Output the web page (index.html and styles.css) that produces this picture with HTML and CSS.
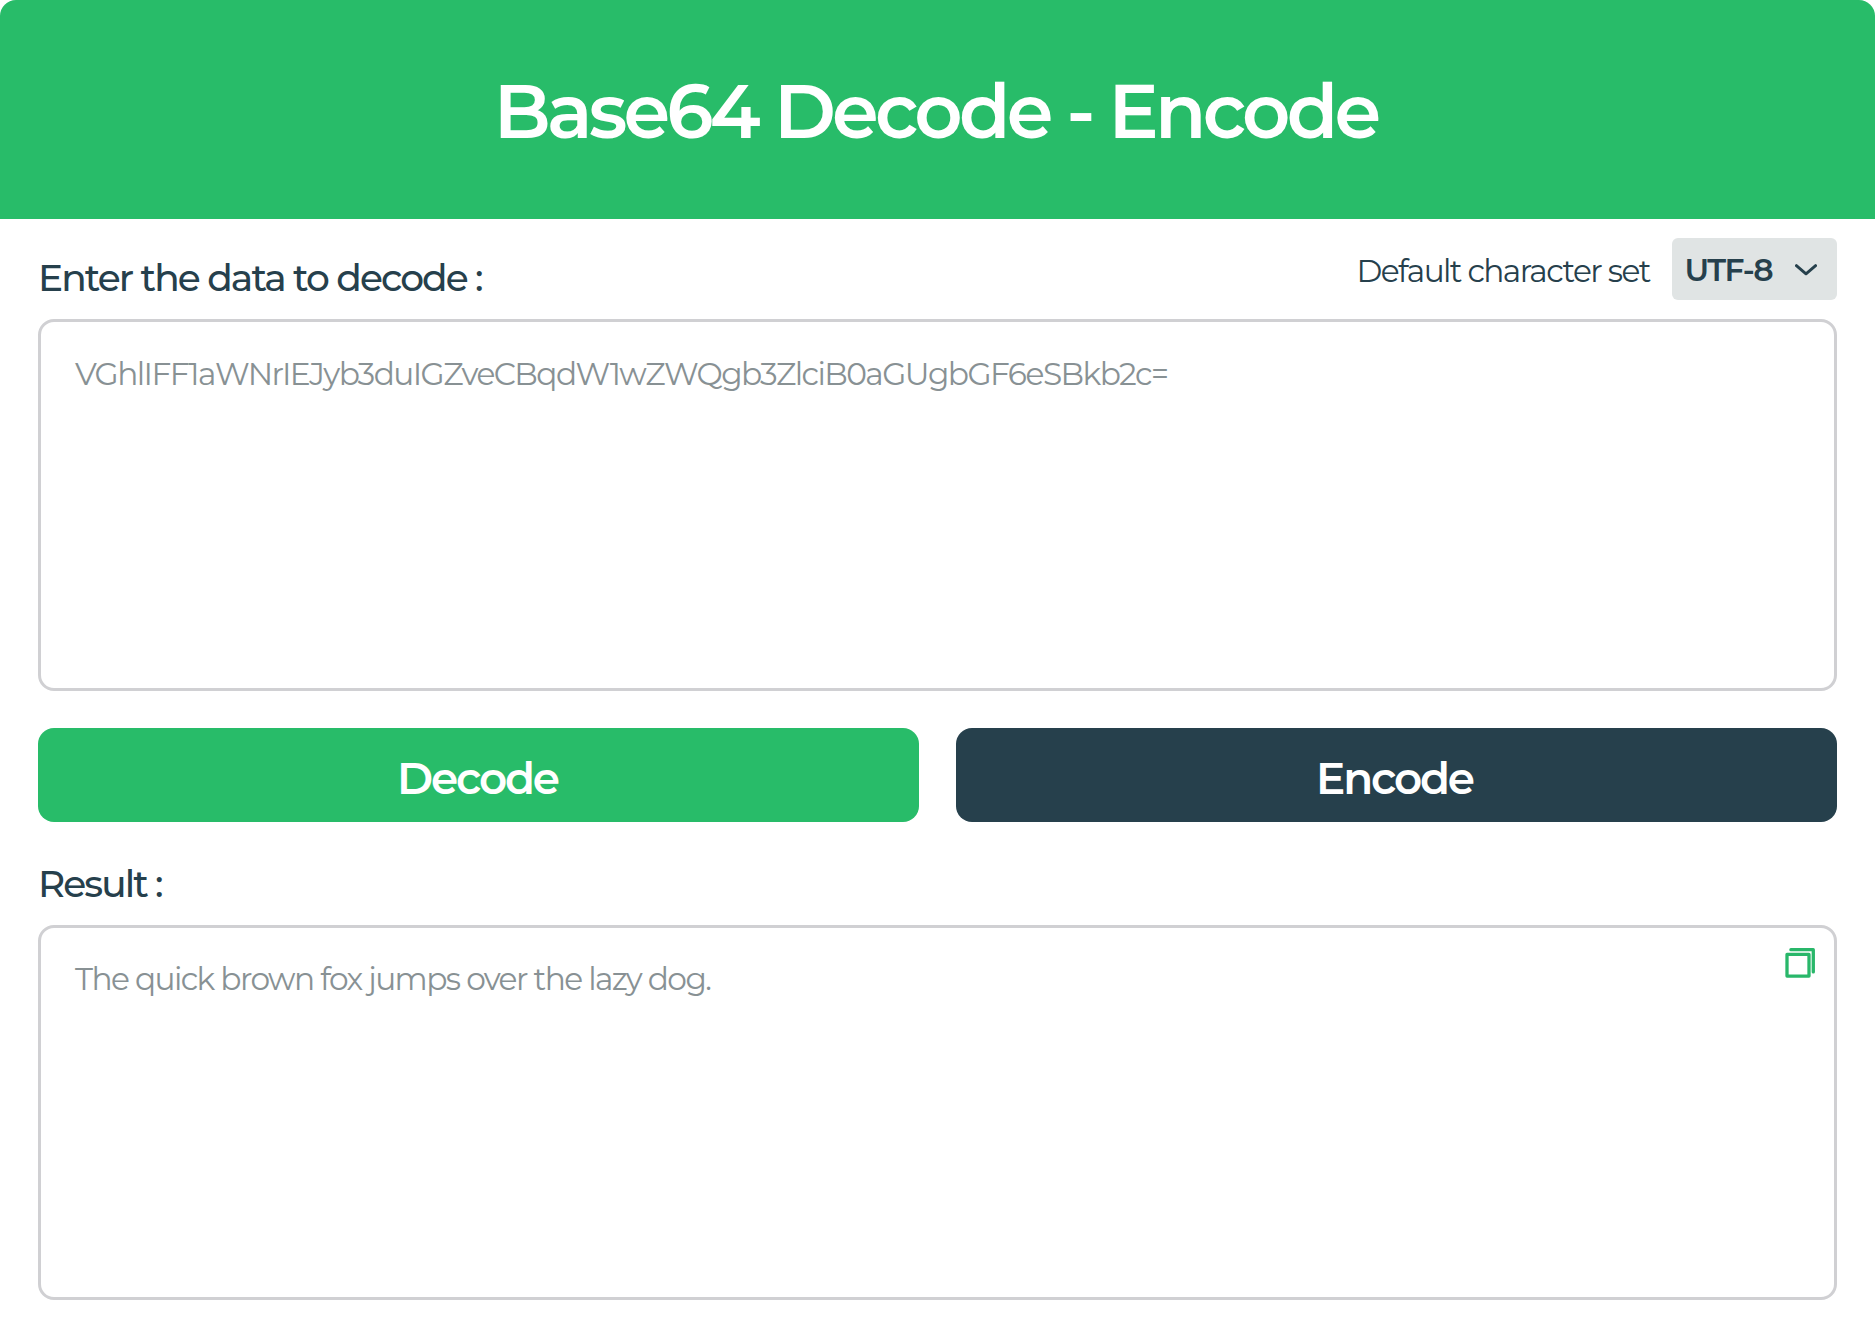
FILE: index.html
```html
<!DOCTYPE html>
<html lang="en">
<head>
<meta charset="utf-8">
<title>Base64 Decode - Encode</title>
<link rel="stylesheet" href="styles.css">
</head>
<body>
<main class="converter">
  <header class="banner">
    <h1 class="banner-title">Base64 Decode - Encode</h1>
  </header>
  <div class="content">
    <div class="toolbar">
      <label class="field-label" for="source">Enter the data to decode :</label>
      <div class="charset">
        <span class="charset-label">Default character set</span>
        <button class="charset-select" type="button">
          <span>UTF-8</span>
          <svg class="chevron" width="22" height="12" viewBox="0 0 22 12" aria-hidden="true"><path d="M1.4 1.6 11 9.8l9.6-8.2"/></svg>
        </button>
      </div>
    </div>
    <textarea class="box source" id="source" spellcheck="false">VGhlIFF1aWNrIEJyb3duIGZveCBqdW1wZWQgb3ZlciB0aGUgbGF6eSBkb2c=</textarea>
    <div class="actions">
      <button class="action decode" type="button">Decode</button>
      <button class="action encode" type="button">Encode</button>
    </div>
    <label class="field-label result-label" for="result">Result :</label>
    <div class="result-wrap">
      <textarea class="box result" id="result" spellcheck="false" readonly>The quick brown fox jumps over the lazy dog.</textarea>
      <button class="copy" type="button" aria-label="Copy">
        <svg width="30" height="30" viewBox="0 0 30 30" aria-hidden="true"><path d="M2 6.4h22v21.7H2zM5.9 1.7h22.4v22.2"/></svg>
      </button>
    </div>
  </div>
</main>
</body>
</html>
```
FILE: styles.css
```css
* {
  box-sizing: border-box;
}

body {
  margin: 0;
  background: #fff;
  color: #26404c;
  font-family: Montserrat, Inter, sans-serif;
  letter-spacing: -0.05em;
}

button,
textarea {
  margin: 0;
  border: 0;
  font-family: inherit;
  color: inherit;
}

.banner {
  display: flex;
  align-items: center;
  justify-content: center;
  height: 218.5px;
  padding: 4px 4px 0 0;
  border-radius: 16px 16px 0 0;
  background: #28bc69;
}

.banner-title {
  margin: 0;
  color: #fff;
  font-size: 75px;
  font-weight: 600;
  letter-spacing: -0.05em;
}

.content {
  display: flex;
  flex-direction: column;
  padding: 19px 38px 37px 37.5px;
}

.toolbar {
  display: flex;
  align-items: flex-start;
  justify-content: space-between;
  height: 81.5px;
}

.field-label {
  padding-left: 0.4px;
  font-size: 37.5px;
  font-weight: 500;
  line-height: 46px;
  letter-spacing: -0.05em;
}

.toolbar .field-label {
  margin-top: 17px;
}

.charset {
  display: flex;
  align-items: center;
  gap: 21.5px;
  font-size: 31.25px;
}

.charset-label {
  padding-top: 4px;
  letter-spacing: -0.05em;
}

.charset-select {
  display: flex;
  align-items: center;
  justify-content: space-between;
  width: 165.5px;
  height: 62.5px;
  padding: 3px 20px 0 13px;
  border-radius: 6px;
  background: #e0e4e4;
  font-size: 31.25px;
  font-weight: 600;
  letter-spacing: -0.05em;
}

.chevron {
  margin-top: -1px;
  fill: none;
  stroke: #26404c;
  stroke-width: 2.9;
  stroke-linecap: round;
  stroke-linejoin: round;
}

.box {
  display: block;
  width: 100%;
  padding: 32.5px 34.5px;
  border: 3px solid #d0d0d3;
  border-radius: 16px;
  outline: 0;
  resize: none;
  background: #fff;
  color: #889194;
  font-size: 31.25px;
  font-weight: 400;
  line-height: 38px;
  letter-spacing: -0.05em;
}

.source {
  height: 371.5px;
}

.actions {
  display: grid;
  grid-template-columns: 1fr 1fr;
  gap: 37.5px;
  margin-top: 37.5px;
}

.action {
  height: 93.75px;
  padding: 7px 1px 0 0;
  border-radius: 16px;
  color: #fff;
  font-size: 43.75px;
  font-weight: 600;
  letter-spacing: -0.05em;
}

.decode {
  background: #28bc69;
}

.encode {
  padding-right: 4px;
  background: #26404c;
}

.result-label {
  margin: 39px 0 18px;
}

.result-wrap {
  position: relative;
}

.result {
  height: 375px;
}

.copy {
  position: absolute;
  top: 22.75px;
  right: 22.5px;
  display: flex;
  padding: 0;
  background: none;
}

.copy path {
  fill: none;
  stroke: #29b76a;
  stroke-width: 3.3;
  stroke-linejoin: round;
  stroke-linecap: round;
}
```
